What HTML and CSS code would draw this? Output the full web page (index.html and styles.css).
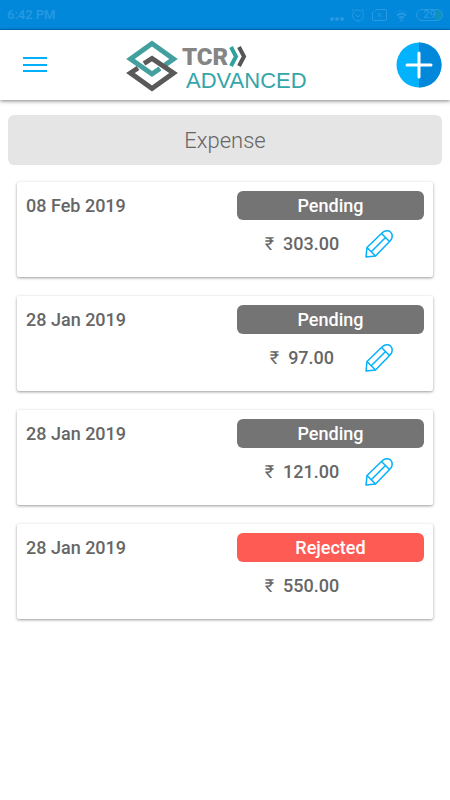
FILE: index.html
```html
<!DOCTYPE html>
<html lang="en">
<head>
    <meta charset="UTF-8">
    <meta name="viewport" content="width=device-width, initial-scale=1">
    <title>Expense</title>
    <link rel="stylesheet" href="styles.css">
</head>
<body>

    <!-- Shared pencil icon -->
    <svg class="sprite" aria-hidden="true">
        <symbol id="pencil" viewBox="0 0 28 28">
            <path d="M1 27 2 17.500 17.500 2.500C20 0 24 .5 25.500 2 27.500 4 28 8 25.500 10.500L10.500 26Z"/>
            <path d="M2 17.500 10.500 26M16.500 3.500 24.500 11.500M6.500 21.500 20.500 7.500"/>
        </symbol>
    </svg>

    <!-- Status Bar -->
    <div class="status-bar">
        <span class="clock">6:42 PM</span>
        <div class="status-icons">
            <svg width="14" height="14" viewBox="0 0 14 14" class="solid"><circle cx="2" cy="11" r="2"/><circle cx="7" cy="11" r="2"/><circle cx="12" cy="11" r="2"/></svg>
            <svg width="14" height="14" viewBox="0 0 14 14"><circle cx="7" cy="7.500" r="5.500"/><path d="M4.500 6.500 7 9l2.500-2.500M1 3l2-2M13 3l-2-2"/></svg>
            <svg width="15" height="14" viewBox="0 0 15 14"><path d="M4 1.500h9a1.500 1.500 0 0 1 1.500 1.500v8a1.500 1.500 0 0 1-1.500 1.500H2A1.500 1.500 0 0 1 .5 11V5ZM5.500 5l4 4M9.500 5l-4 4"/></svg>
            <svg width="15" height="14" viewBox="0 0 15 14"><path d="M1 5q6.500-5 13 0" opacity=".4"/><path d="M3 7.500q4.500-4 9 0M5 10q2.500-2 5 0" stroke-width="1.800"/><circle cx="7.500" cy="12" r="1"/></svg>
            <span class="battery">29</span>
        </div>
    </div>

    <!-- App Header -->
    <header class="header">
        <button class="icon-btn" aria-label="Menu">
            <svg width="24" height="18" viewBox="0 0 24 18"><path d="M0 2h24M0 9h24M0 15h24" stroke="#03b0fa" stroke-width="2"/></svg>
        </button>
        <svg class="logo" width="184" height="60" viewBox="0 0 184 60" role="img" aria-label="TCR Advanced">
            <g fill="none" stroke-width="5">
                <path d="M41 30 49.500 24 28 8.500 6.500 24 28 39 36 33.500" stroke="#43a09e"/>
                <path d="M20 28.500 28 23.500 49.500 38 28 53.500 6.500 38 14 33" stroke="#595959"/>
            </g>
            <text class="logo-mark" x="58" y="30">TCR</text>
            <g fill="none" stroke-width="4">
                <path d="M107 12l5 9.500-5 9.500" stroke="#2fa39b"/>
                <path d="M115 12l5 9.500-5 9.500" stroke="#555"/>
            </g>
            <text class="logo-name" x="62" y="53">ADVANCED</text>
        </svg>
        <button class="icon-btn" aria-label="Add expense">
            <svg width="46" height="46" viewBox="0 0 46 46">
                <circle cx="23" cy="23" r="22.500" fill="#02b2fd"/>
                <path d="M23 .5a22.500 22.500 0 0 1 0 45Z" fill="#0288db"/>
                <path d="M23 11v24M11 23h24" stroke="#fff" stroke-width="3" stroke-linecap="round"/>
            </svg>
        </button>
    </header>

    <main class="content">
        <h1 class="page-title">Expense</h1>

        <!-- Expense Cards -->
        <div class="cards">
            <article class="card">
                <time class="date" datetime="2019-02-08">08 Feb 2019</time>
                <div class="details">
                    <div class="status pending">Pending</div>
                    <div class="amount"><span class="currency">₹</span><span>303.00</span></div>
                    <button class="icon-btn" aria-label="Edit"><svg class="pencil"><use href="#pencil"/></svg></button>
                </div>
            </article>

            <article class="card">
                <time class="date" datetime="2019-01-28">28 Jan 2019</time>
                <div class="details">
                    <div class="status pending">Pending</div>
                    <div class="amount"><span class="currency">₹</span><span>97.00</span></div>
                    <button class="icon-btn" aria-label="Edit"><svg class="pencil"><use href="#pencil"/></svg></button>
                </div>
            </article>

            <article class="card">
                <time class="date" datetime="2019-01-28">28 Jan 2019</time>
                <div class="details">
                    <div class="status pending">Pending</div>
                    <div class="amount"><span class="currency">₹</span><span>121.00</span></div>
                    <button class="icon-btn" aria-label="Edit"><svg class="pencil"><use href="#pencil"/></svg></button>
                </div>
            </article>

            <article class="card">
                <time class="date" datetime="2019-01-28">28 Jan 2019</time>
                <div class="details">
                    <div class="status rejected">Rejected</div>
                    <div class="amount"><span class="currency">₹</span><span>550.00</span></div>
                </div>
            </article>
        </div>
    </main>

</body>
</html>
```

FILE: styles.css
```css
/* === Global Styles === */
* {
    box-sizing: border-box;
}

body {
    margin: 0;
    background: #fff;
    color: #666;
    font-family: Roboto, sans-serif;
}

.sprite {
    display: none;
}

/* === Status bar === */
.status-bar {
    display: flex;
    align-items: center;
    justify-content: space-between;
    height: 30px;
    padding: 0 7px;
    background: #0288db;
    border-bottom: 1px solid #0272c8;
    color: #2999e1;
    font-size: 13px;
    font-weight: 500;
}

.status-icons {
    display: flex;
    align-items: center;
    gap: 7px;
}

.status-icons svg {
    fill: none;
    stroke: #2999e1;
}

.status-icons .solid {
    fill: #2999e1;
    stroke: none;
}

.battery {
    width: 27px;
    height: 12px;
    border: 1px solid #2999e1;
    border-radius: 6px;
    background: linear-gradient(to right, transparent 18px, #0c93bb 18px);
    font-size: 11px;
    line-height: 10px;
    text-align: center;
}

/* === Header === */
.header {
    display: flex;
    align-items: center;
    justify-content: space-between;
    height: 70px;
    padding: 0 8px 0 23px;
    background: #fff;
    box-shadow: 0 1px 4px rgba(0, 0, 0, 0.5);
}

.icon-btn {
    display: flex;
    padding: 0;
    border: none;
    background: none;
    cursor: pointer;
}

.logo {
    margin-right: 11px;
}

.logo-mark {
    fill: #858585;
    font-size: 24px;
    font-weight: 900;
}

.logo-name {
    fill: #35a5aa;
    font-family: "Liberation Sans", Arial, sans-serif;
    font-size: 22px;
}

/* === Page content === */
.content {
    padding: 15px 8px;
}

.page-title {
    margin: 0 0 17px;
    padding-top: 2px;
    border-radius: 6px;
    background: #e5e5e5;
    font-size: 22px;
    font-weight: 300;
    line-height: 48px;
    text-align: center;
}

.cards {
    display: flex;
    flex-direction: column;
    gap: 19px;
    padding: 0 9px;
}

/* === Expense card === */
.card {
    display: grid;
    grid-template-columns: 53% 47%;
    min-height: 95px;
    padding: 9px;
    border-radius: 2px;
    background: #fff;
    box-shadow: 0 1px 3px rgba(0, 0, 0, 0.4);
    font-size: 18px;
    font-weight: 500;
}

.date {
    line-height: 30px;
}

.details {
    display: grid;
    grid-template-columns: 1fr 59px;
    align-content: start;
    align-items: center;
    row-gap: 10px;
}

/* === Status pill === */
.status {
    grid-column: 1 / -1;
    padding-top: 1px;
    border-radius: 6px;
    color: #fff;
    line-height: 28px;
    text-align: center;
}

.pending { background: #747474; }
.rejected { background: #ff5b55; }

.amount {
    display: flex;
    justify-content: center;
    gap: 9px;
    padding-left: 2px;
    line-height: 28px;
}

.currency {
    font-weight: 400;
}

.pencil {
    width: 28px;
    height: 28px;
    fill: none;
    stroke: #03b0fa;
    stroke-width: 1.5px;
    stroke-linejoin: round;
}
```
